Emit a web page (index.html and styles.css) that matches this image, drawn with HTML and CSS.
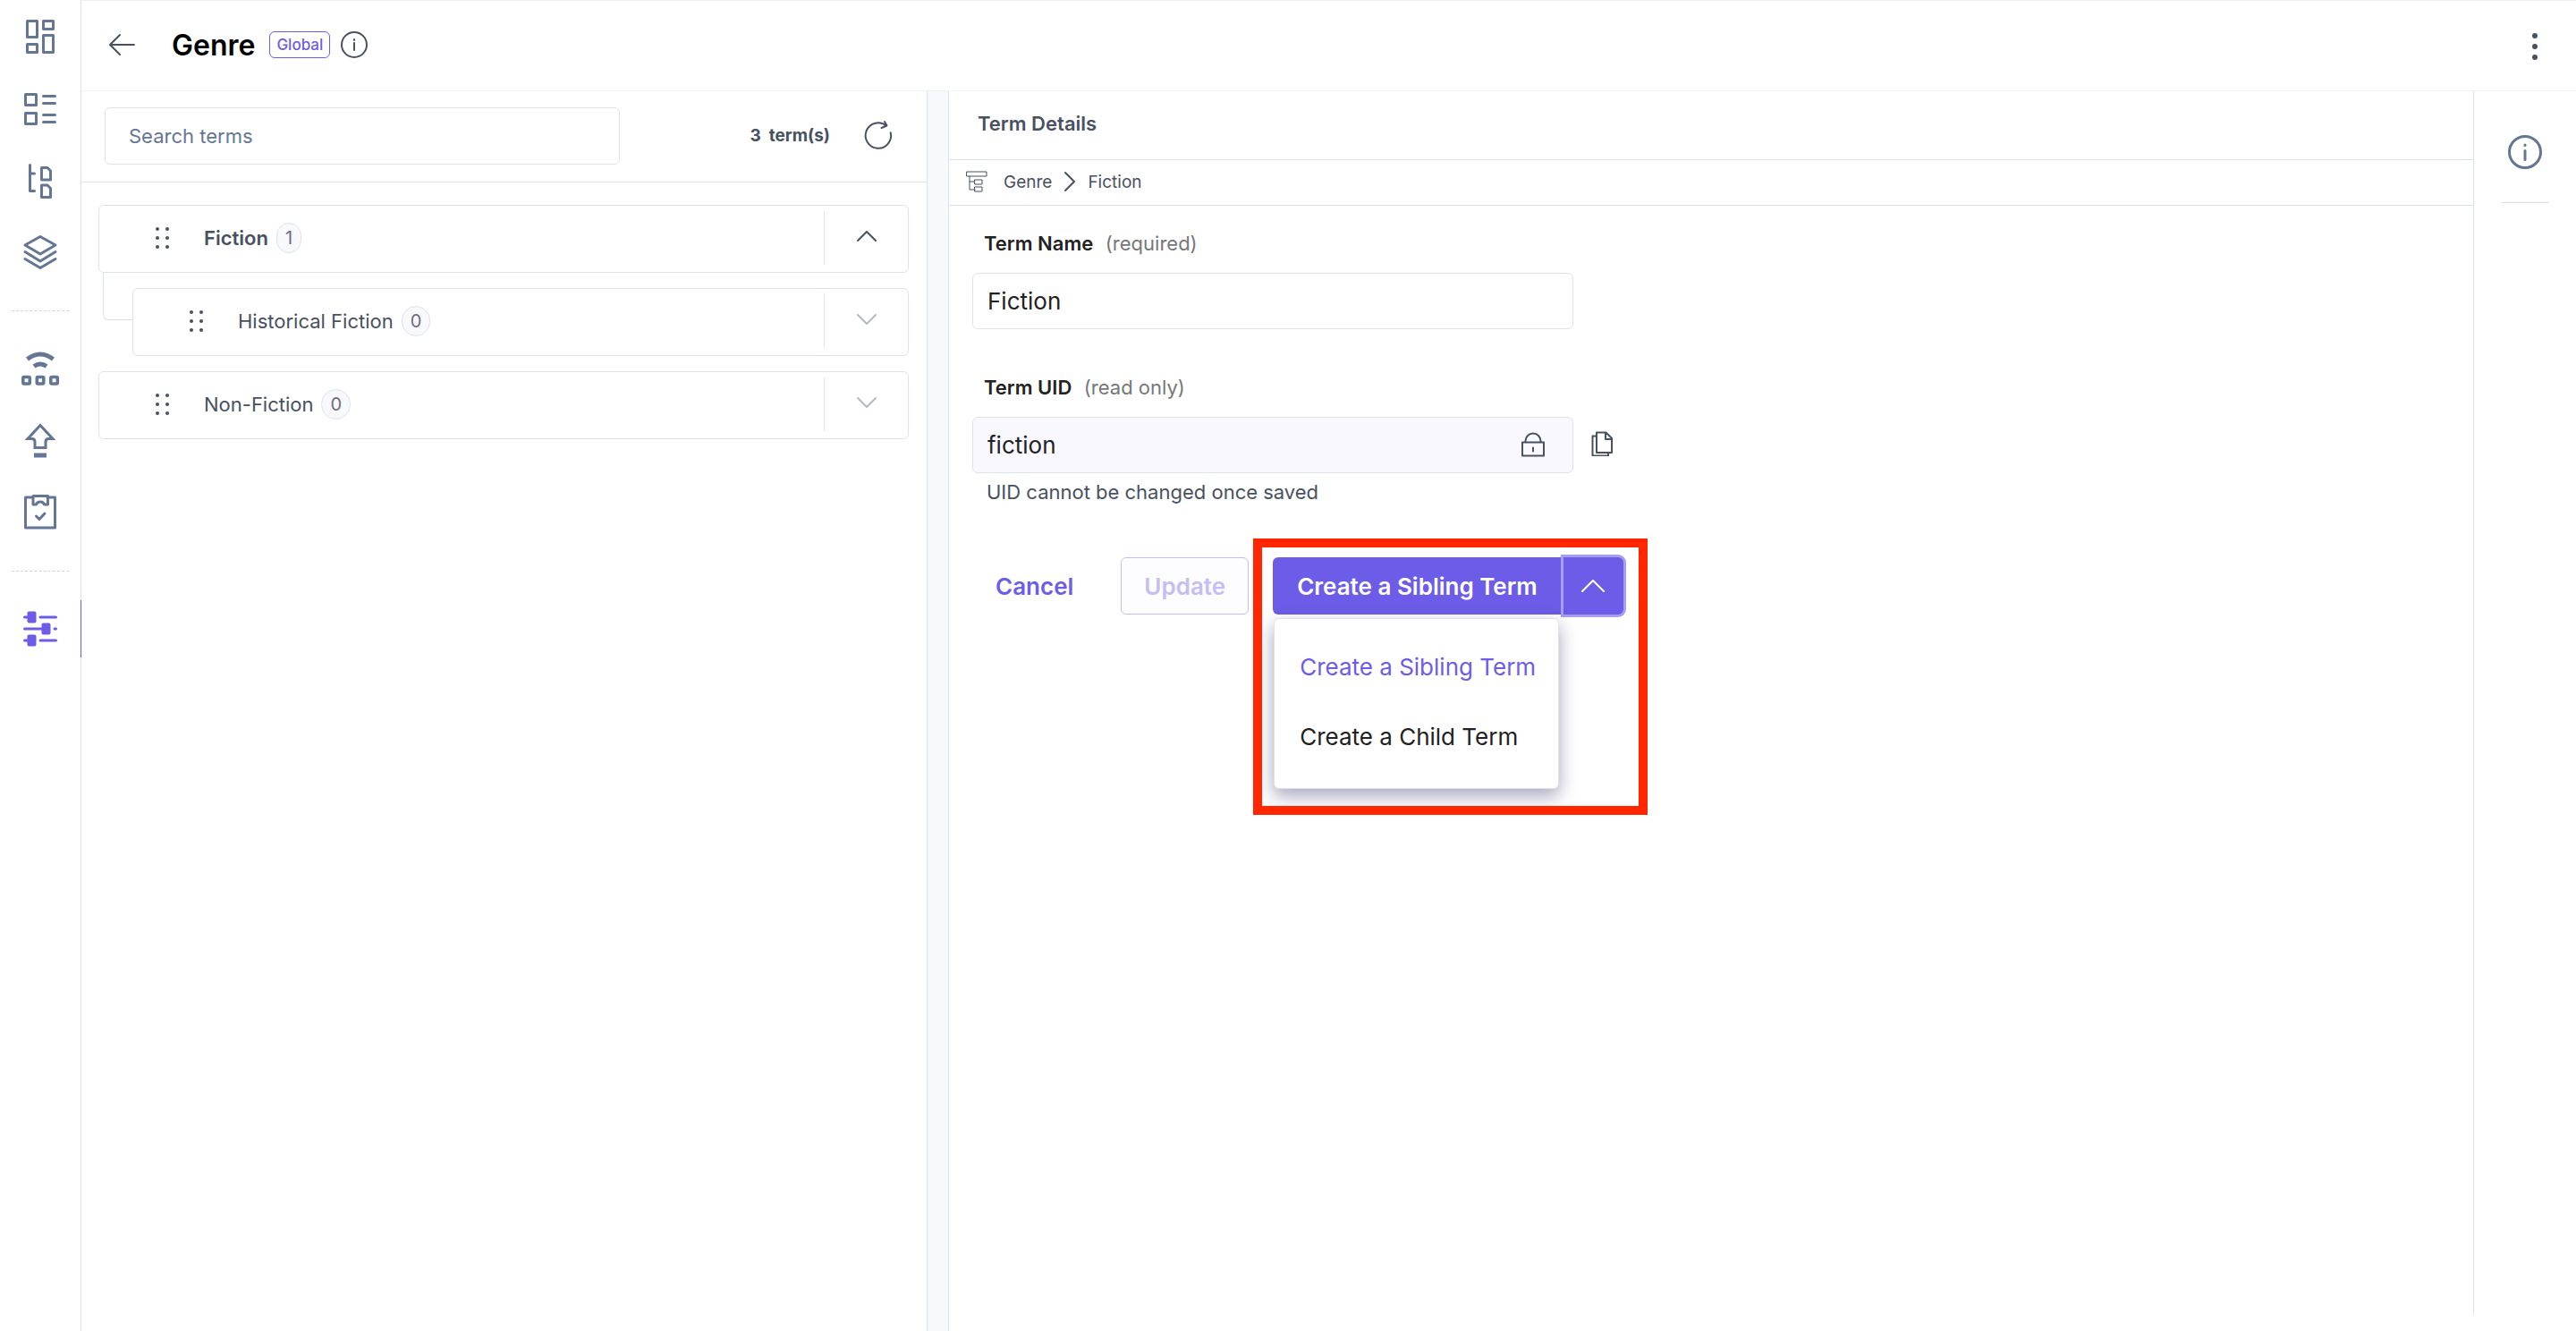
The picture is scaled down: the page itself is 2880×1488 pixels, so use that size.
FILE: index.html
```html
<!DOCTYPE html>
<html lang="en">
<head>
  <meta charset="UTF-8">
  <title>Genre</title>
  <link rel="stylesheet" href="styles.css">
</head>
<body>

  <nav class="sidebar" aria-label="Main">
    <a href="#" aria-label="Dashboard">
      <svg viewBox="-2 -2 44 44">
        <rect x="5.5" y="2.5" width="11" height="18"/><rect x="23.5" y="2.5" width="11" height="9"/>
        <rect x="5.5" y="28.5" width="11" height="9"/><rect x="23.5" y="18.5" width="11" height="19"/>
      </svg>
    </a>
    <a href="#" aria-label="Content types">
      <svg viewBox="-2 -2 44 44">
        <rect x="3.5" y="4.5" width="12" height="12"/><rect x="3.5" y="25.5" width="12" height="12"/>
        <path d="M23.5 6.5h13M23.5 14.5h13M23.5 27.5h13M23.5 35.5h13"/>
      </svg>
    </a>
    <a href="#" aria-label="Entries">
      <svg viewBox="-2 -2 44 44">
        <path d="M8.5 3.5v29h5M8.5 13h5"/>
        <path d="M21.5 6.500h6.500l3.500 3.500v10h-10zM21.5 26h6.500l3.500 3.500v10h-10z"/>
      </svg>
    </a>
    <a href="#" aria-label="Stacks">
      <svg viewBox="-2 -2 44 44">
        <path d="M20 3.5L37 13 20 23 3 13zM3 20.5L20 31l17-10.5M3 28.5l17 10 17-10"/>
      </svg>
    </a>
    <hr>
    <a href="#" aria-label="Publish queue">
      <svg viewBox="-2 -2 44 44">
        <path class="thick" d="M5.5 9.5Q20-1.500 34.5 9.5M13 17.500q7-5 14 0"/>
        <g stroke-width="3.5"><rect x=".8" y="29.5" width="7.500" height="7.500" rx="1"/><rect x="16.3" y="29.5" width="7.500" height="7.500" rx="1"/><rect x="31.8" y="29.5" width="7.500" height="7.500" rx="1"/></g>
      </svg>
    </a>
    <a href="#" aria-label="Releases">
      <svg viewBox="-2 -2 44 44">
        <path class="sharp" d="M20 3.5L6 18.5h4.500q3.500 0 3.500 3.500v6.500h12V22q0-3.500 3.500-3.500H34z"/>
        <path class="fill" d="M13 34.5h14v5H13z"/>
      </svg>
    </a>
    <a href="#" aria-label="Tasks">
      <svg viewBox="-2 -2 44 44">
        <path d="M12 4H3.500v34h33V4H28"/>
        <path d="M12 2.500h16.500v9.500h-4q-1-3-4.500-3t-4.500 3H12z"/>
        <path d="M15.500 25l3.500 3.500 6-6.500"/>
      </svg>
    </a>
    <hr>
    <a href="#" class="active" aria-label="Taxonomy">
      <svg viewBox="-2 -2 44 44">
        <path d="M2.500 7h4M20 7h17.500M2.500 20H22M36 20h1.500M2.500 33h4M20 33h17.500"/>
        <g class="fill"><rect x="5.5" y=".5" width="10" height="13" rx="2"/><rect x="21.5" y="13.5" width="10" height="13" rx="2"/><rect x="5.5" y="26.5" width="10" height="13" rx="2"/></g>
      </svg>
    </a>
  </nav>

  <div class="page">
    <header class="topbar">
      <button type="button" class="icon-btn" aria-label="Back">
        <svg width="30" height="26" viewBox="0 0 30 26"><path d="M13 2L2 13l11 11M2 13h27"/></svg>
      </button>
      <h1>Genre</h1>
      <span class="tag">Global</span>
      <button type="button" class="icon-btn" aria-label="Info">
        <svg width="30" height="30" viewBox="0 0 30 30"><circle cx="15" cy="15" r="14"/><path d="M15 13v8M15 9v1"/></svg>
      </button>
      <button type="button" class="icon-btn more" aria-label="More">
        <svg width="8" height="32" viewBox="0 0 8 32"><g class="fill"><circle cx="4" cy="4" r="3"/><circle cx="4" cy="16" r="3"/><circle cx="4" cy="28" r="3"/></g></svg>
      </button>
    </header>

    <div class="content">
      <section class="terms">
        <div class="terms-head">
          <input type="search" class="search" placeholder="Search terms" aria-label="Search terms">
          <span class="count">3 &nbsp;term(s)</span>
          <button type="button" class="icon-btn" aria-label="Refresh">
            <svg width="36" height="36" viewBox="-18 -18 36 36"><path d="M13.700-3.700A14.200 14.200 0 1 1 9-11.300M7-16l2.500 4.500-6 2.500"/></svg>
          </button>
        </div>

        <ul class="tree">
          <li>
            <div class="term selected">
              <svg class="drag" width="18" height="28" viewBox="0 0 18 28"><g class="fill"><circle cx="4" cy="4" r="2"/><circle cx="15" cy="4" r="2"/><circle cx="4" cy="14" r="2"/><circle cx="15" cy="14" r="2"/><circle cx="4" cy="24" r="2"/><circle cx="15" cy="24" r="2"/></g></svg>
              <a href="#">Fiction</a><span class="badge">1</span>
              <button type="button" class="toggle" aria-label="Collapse"><svg width="24" height="14" viewBox="0 0 24 14"><path d="M2 12L12 2l10 10"/></svg></button>
            </div>
            <ul>
              <li>
                <div class="term">
                  <svg class="drag" width="18" height="28" viewBox="0 0 18 28"><g class="fill"><circle cx="4" cy="4" r="2"/><circle cx="15" cy="4" r="2"/><circle cx="4" cy="14" r="2"/><circle cx="15" cy="14" r="2"/><circle cx="4" cy="24" r="2"/><circle cx="15" cy="24" r="2"/></g></svg>
                  <a href="#">Historical Fiction</a><span class="badge">0</span>
                  <button type="button" class="toggle" disabled aria-label="Expand"><svg width="24" height="14" viewBox="0 0 24 14"><path d="M2 2l10 10L22 2"/></svg></button>
                </div>
              </li>
            </ul>
          </li>
          <li>
            <div class="term">
              <svg class="drag" width="18" height="28" viewBox="0 0 18 28"><g class="fill"><circle cx="4" cy="4" r="2"/><circle cx="15" cy="4" r="2"/><circle cx="4" cy="14" r="2"/><circle cx="15" cy="14" r="2"/><circle cx="4" cy="24" r="2"/><circle cx="15" cy="24" r="2"/></g></svg>
              <a href="#">Non-Fiction</a><span class="badge">0</span>
              <button type="button" class="toggle" disabled aria-label="Expand"><svg width="24" height="14" viewBox="0 0 24 14"><path d="M2 2l10 10L22 2"/></svg></button>
            </div>
          </li>
        </ul>
      </section>

      <div class="splitter"></div>

      <main class="details">
        <h2>Term Details</h2>
        <nav class="crumbs" aria-label="Breadcrumb">
          <svg class="tree-icon" width="26" height="26" viewBox="0 0 26 26"><path d="M2 2h22v5H2zM5 7v15h6M5 13h5M11 11h8v5h-8zM11 19h8v5h-8z"/></svg>
          <a href="#">Genre</a>
          <svg width="14" height="24" viewBox="0 0 14 24"><path d="M2 2l10 10L2 22"/></svg>
          <a href="#">Fiction</a>
        </nav>

        <form class="form">
          <div class="field">
            <label for="name">Term Name <span>(required)</span></label>
            <input type="text" id="name" value="Fiction">
          </div>
          <div class="field">
            <label for="uid">Term UID <span>(read only)</span></label>
            <div class="uid-row">
              <div class="locked">
                <input type="text" id="uid" value="fiction" readonly>
                <svg width="26" height="28" viewBox="0 0 26 28"><path d="M1 11.5h24v15H1zM4.500 11.5V10a8.500 8.500 0 0 1 17 0v1.500M13 17.5v4"/></svg>
              </div>
              <button type="button" class="icon-btn copy" aria-label="Copy UID">
                <svg width="24" height="28" viewBox="0 0 24 28"><path d="M6 1.500h10.500L23 8v16H6zM16 1.500V9h7M6 5.500H1.500v22h17.500V24"/></svg>
              </button>
            </div>
            <p class="hint">UID cannot be changed once saved</p>
          </div>

          <div class="actions">
            <button type="button" class="btn cancel">Cancel</button>
            <button type="submit" class="btn update" disabled>Update</button>
            <div class="split">
              <button type="button" class="btn primary">Create a Sibling Term</button>
              <button type="button" class="btn caret" aria-expanded="true" aria-label="More create options"><svg width="28" height="16" viewBox="0 0 28 16"><path d="M2 14L14 2l12 12"/></svg></button>
              <div class="menu">
                <button type="button" class="current">Create a Sibling Term</button>
                <button type="button">Create a Child Term</button>
              </div>
              <div class="highlight"></div>
            </div>
          </div>
        </form>
      </main>

      <aside class="rail">
        <button type="button" class="icon-btn" aria-label="Details">
          <svg width="40" height="40" viewBox="0 0 40 40"><circle cx="20" cy="20" r="17.500"/><path d="M20 18.500v10M20 12v.5"/></svg>
        </button>
      </aside>
    </div>
  </div>

</body>
</html>
```

FILE: styles.css
```css
* { box-sizing: border-box; }
body {
  margin: 0;
  min-height: 100vh;
  display: flex;
  background: #fff;
  color: #475161;
  font-family: Inter, sans-serif;
  font-size: 22px;
}
a { color: inherit; text-decoration: none; }
button, input { font: inherit; color: inherit; }
button { padding: 0; border: 0; background: none; }
ul { list-style: none; margin: 0; padding: 0; }
svg {
  display: block;
  fill: none;
  stroke: currentColor;
  stroke-width: 2;
  stroke-linecap: round;
  stroke-linejoin: round;
}
.fill { fill: currentColor; stroke: none; }

/* left navigation */
.sidebar {
  flex: none;
  width: 91px;
  padding-top: 1px;
  border-right: 1px solid #dde3ee;
  color: #647696;
}
.sidebar a {
  height: 80px;
  display: flex;
  align-items: center;
  justify-content: center;
}
.sidebar svg { width: 44px; height: 44px; stroke-width: 3; }
.sidebar .thick { stroke-width: 5; stroke-linecap: butt; }
.sidebar .sharp { stroke-linejoin: miter; }
.sidebar hr {
  margin: 26px 13px 24px;
  border: 0;
  border-top: 1px dashed #d3d3d3;
}
.sidebar .active {
  height: 64px;
  margin: 32px -1px 0 0;
  border-right: 1px solid #6c5ce7;
  color: #6c5ce7;
}

.page { flex: 1; display: flex; flex-direction: column; }
.topbar {
  height: 102px;
  display: flex;
  align-items: center;
  padding: 0 42px 2px 30px;
  border: solid #edf1f7;
  border-width: 1px 0;
}
.topbar h1 {
  margin: 0 16px 0 41px;
  color: #000;
  font-size: 32px;
  font-weight: 600;
}
.tag {
  margin-right: 12px;
  padding: 0 7px;
  border: 1px solid #6c5ce7;
  border-radius: 6px;
  color: #6c5ce7;
  font-size: 17px;
  font-weight: 500;
  line-height: 28px;
}
.more { margin-left: auto; padding-top: 4px; }

.content { flex: 1; display: flex; }

/* term list */
.terms { flex: 0 1 945px; }
.terms-head {
  height: 102px;
  display: flex;
  align-items: center;
  padding: 0 36px 2px 26px;
  border-bottom: 1px solid #dde3ee;
}
.search {
  flex: 0 1 576px;
  height: 64px;
  padding: 0 26px;
  border: 1px solid #dde3ee;
  border-radius: 6px;
}
.search::placeholder { color: #647696; }
.count {
  margin: 0 36px 0 auto;
  font-size: 19px;
  font-weight: 700;
}
.tree { padding: 25px 20px 0 19px; }
.tree li + li, .tree ul { padding-top: 17px; }
.tree ul {
  position: relative;
  padding-left: 38px;
}
/* elbow from parent to child */
.tree ul::before {
  content: "";
  position: absolute;
  left: 5px;
  top: 0;
  width: 33px;
  height: 52px;
  border: solid #dde3ee;
  border-width: 0 0 1px 1px;
  border-bottom-left-radius: 6px;
}
.term {
  height: 76px;
  display: flex;
  align-items: center;
  padding: 0 0 2px 61px;
  border: 1px solid #dde3ee;
  border-radius: 6px;
}
.drag { margin-right: 38px; }
.selected a { font-weight: 600; }
.badge {
  margin-left: 9px;
  padding: 0 9px;
  border: 1px solid #dde3ee;
  border-radius: 17px;
  background: #f7f9fc;
  color: #6e6b86;
  font-size: 20px;
  line-height: 32px;
  text-align: center;
}
.toggle {
  width: 94px;
  height: 60px;
  margin-left: auto;
  padding-bottom: 4px;
  border-left: 1px solid #dde3ee;
}
.toggle svg { margin: auto; }
.toggle:disabled { color: #b5bac0; }

.splitter {
  flex: none;
  width: 25px;
  border: solid #dde3ee;
  border-width: 0 1px;
  background: #f7f9fc;
}

/* term details */
.details {
  flex: 1;
  margin-bottom: 19px;
  border-right: 1px solid #dde3ee;
}
.details h2 {
  height: 77px;
  margin: 0;
  padding-left: 32px;
  border-bottom: 1px solid #dde3ee;
  font-size: 22px;
  font-weight: 600;
  line-height: 72px;
}
.crumbs {
  height: 51px;
  display: flex;
  align-items: center;
  gap: 13px;
  padding: 0 18px 2px;
  border-bottom: 1px solid #dde3ee;
  font-size: 19px;
}
.crumbs a:first-of-type { margin-left: 4px; }
.tree-icon { stroke-width: 1; }
.form { padding: 28px 26px; }
.field { max-width: 716px; margin-bottom: 51px; }
.field label {
  display: block;
  padding: 0 13px;
  margin-bottom: 19px;
  color: #222;
  font-weight: 600;
  line-height: 28px;
}
.field label span {
  margin-left: 8px;
  color: #777;
  font-weight: 400;
}
.field input {
  display: block;
  width: 100%;
  max-width: 672px;
  height: 63px;
  padding: 0 16px;
  border: 1px solid #dde3ee;
  border-radius: 6px;
  color: #222;
  font-size: 26px;
}
.uid-row { display: flex; align-items: center; gap: 20px; }
.locked { position: relative; flex: 0 1 672px; }
.field .locked input { background: #f9f8ff; }
.locked svg { position: absolute; right: 32px; top: 17px; }
.copy { padding-bottom: 4px; }
.hint { margin: 7px 16px 0; line-height: 28px; }

.actions {
  display: flex;
  align-items: center;
  margin-top: 59px;
  padding-left: 26px;
}
.btn {
  height: 64px;
  border-radius: 6px;
  font-size: 26px;
  font-weight: 600;
  white-space: nowrap;
}
.cancel { margin-right: 53px; color: #6c5ce7; }
.update {
  padding: 0 25px;
  margin-right: 27px;
  border: 1px solid #c4bef5;
  background: #fdfcff;
  color: #c4bef5;
}
.split { position: relative; display: flex; }
.primary {
  padding: 0 29px 0 27px;
  border-radius: 6px 0 0 6px;
  background: #6c5ce7;
  color: #fff;
}
.caret {
  width: 67px;
  border-radius: 0 6px 6px 0;
  background: #6c5ce7;
  color: #fff;
  box-shadow: 0 0 0 3px #a79df1;
}
.caret svg { margin: auto; }
.menu {
  position: absolute;
  top: 68px;
  left: 1px;
  padding: 15px 0 18px;
  border: 1px solid #dde3ee;
  border-radius: 6px;
  background: #fff;
  box-shadow: 0 8px 20px rgba(34, 30, 90, .4);
}
.menu button {
  display: block;
  padding: 0 25px 0 28px;
  color: #222;
  font-size: 26px;
  line-height: 78px;
  white-space: nowrap;
}
.menu .current { color: #6c5ce7; }
/* callout frame around the split button and its menu */
.highlight {
  position: absolute;
  top: -21px;
  left: -22px;
  right: -27px;
  height: 309px;
  border: 10px solid #ff2600;
  pointer-events: none;
}

.rail {
  flex: none;
  width: 114px;
  padding: 48px 31px;
  color: #647696;
}
.rail button {
  display: block;
  width: 100%;
  padding-bottom: 36px;
  border-bottom: 1px solid #d3dbe8;
}
.rail svg { margin: auto; stroke-width: 3; }
```
